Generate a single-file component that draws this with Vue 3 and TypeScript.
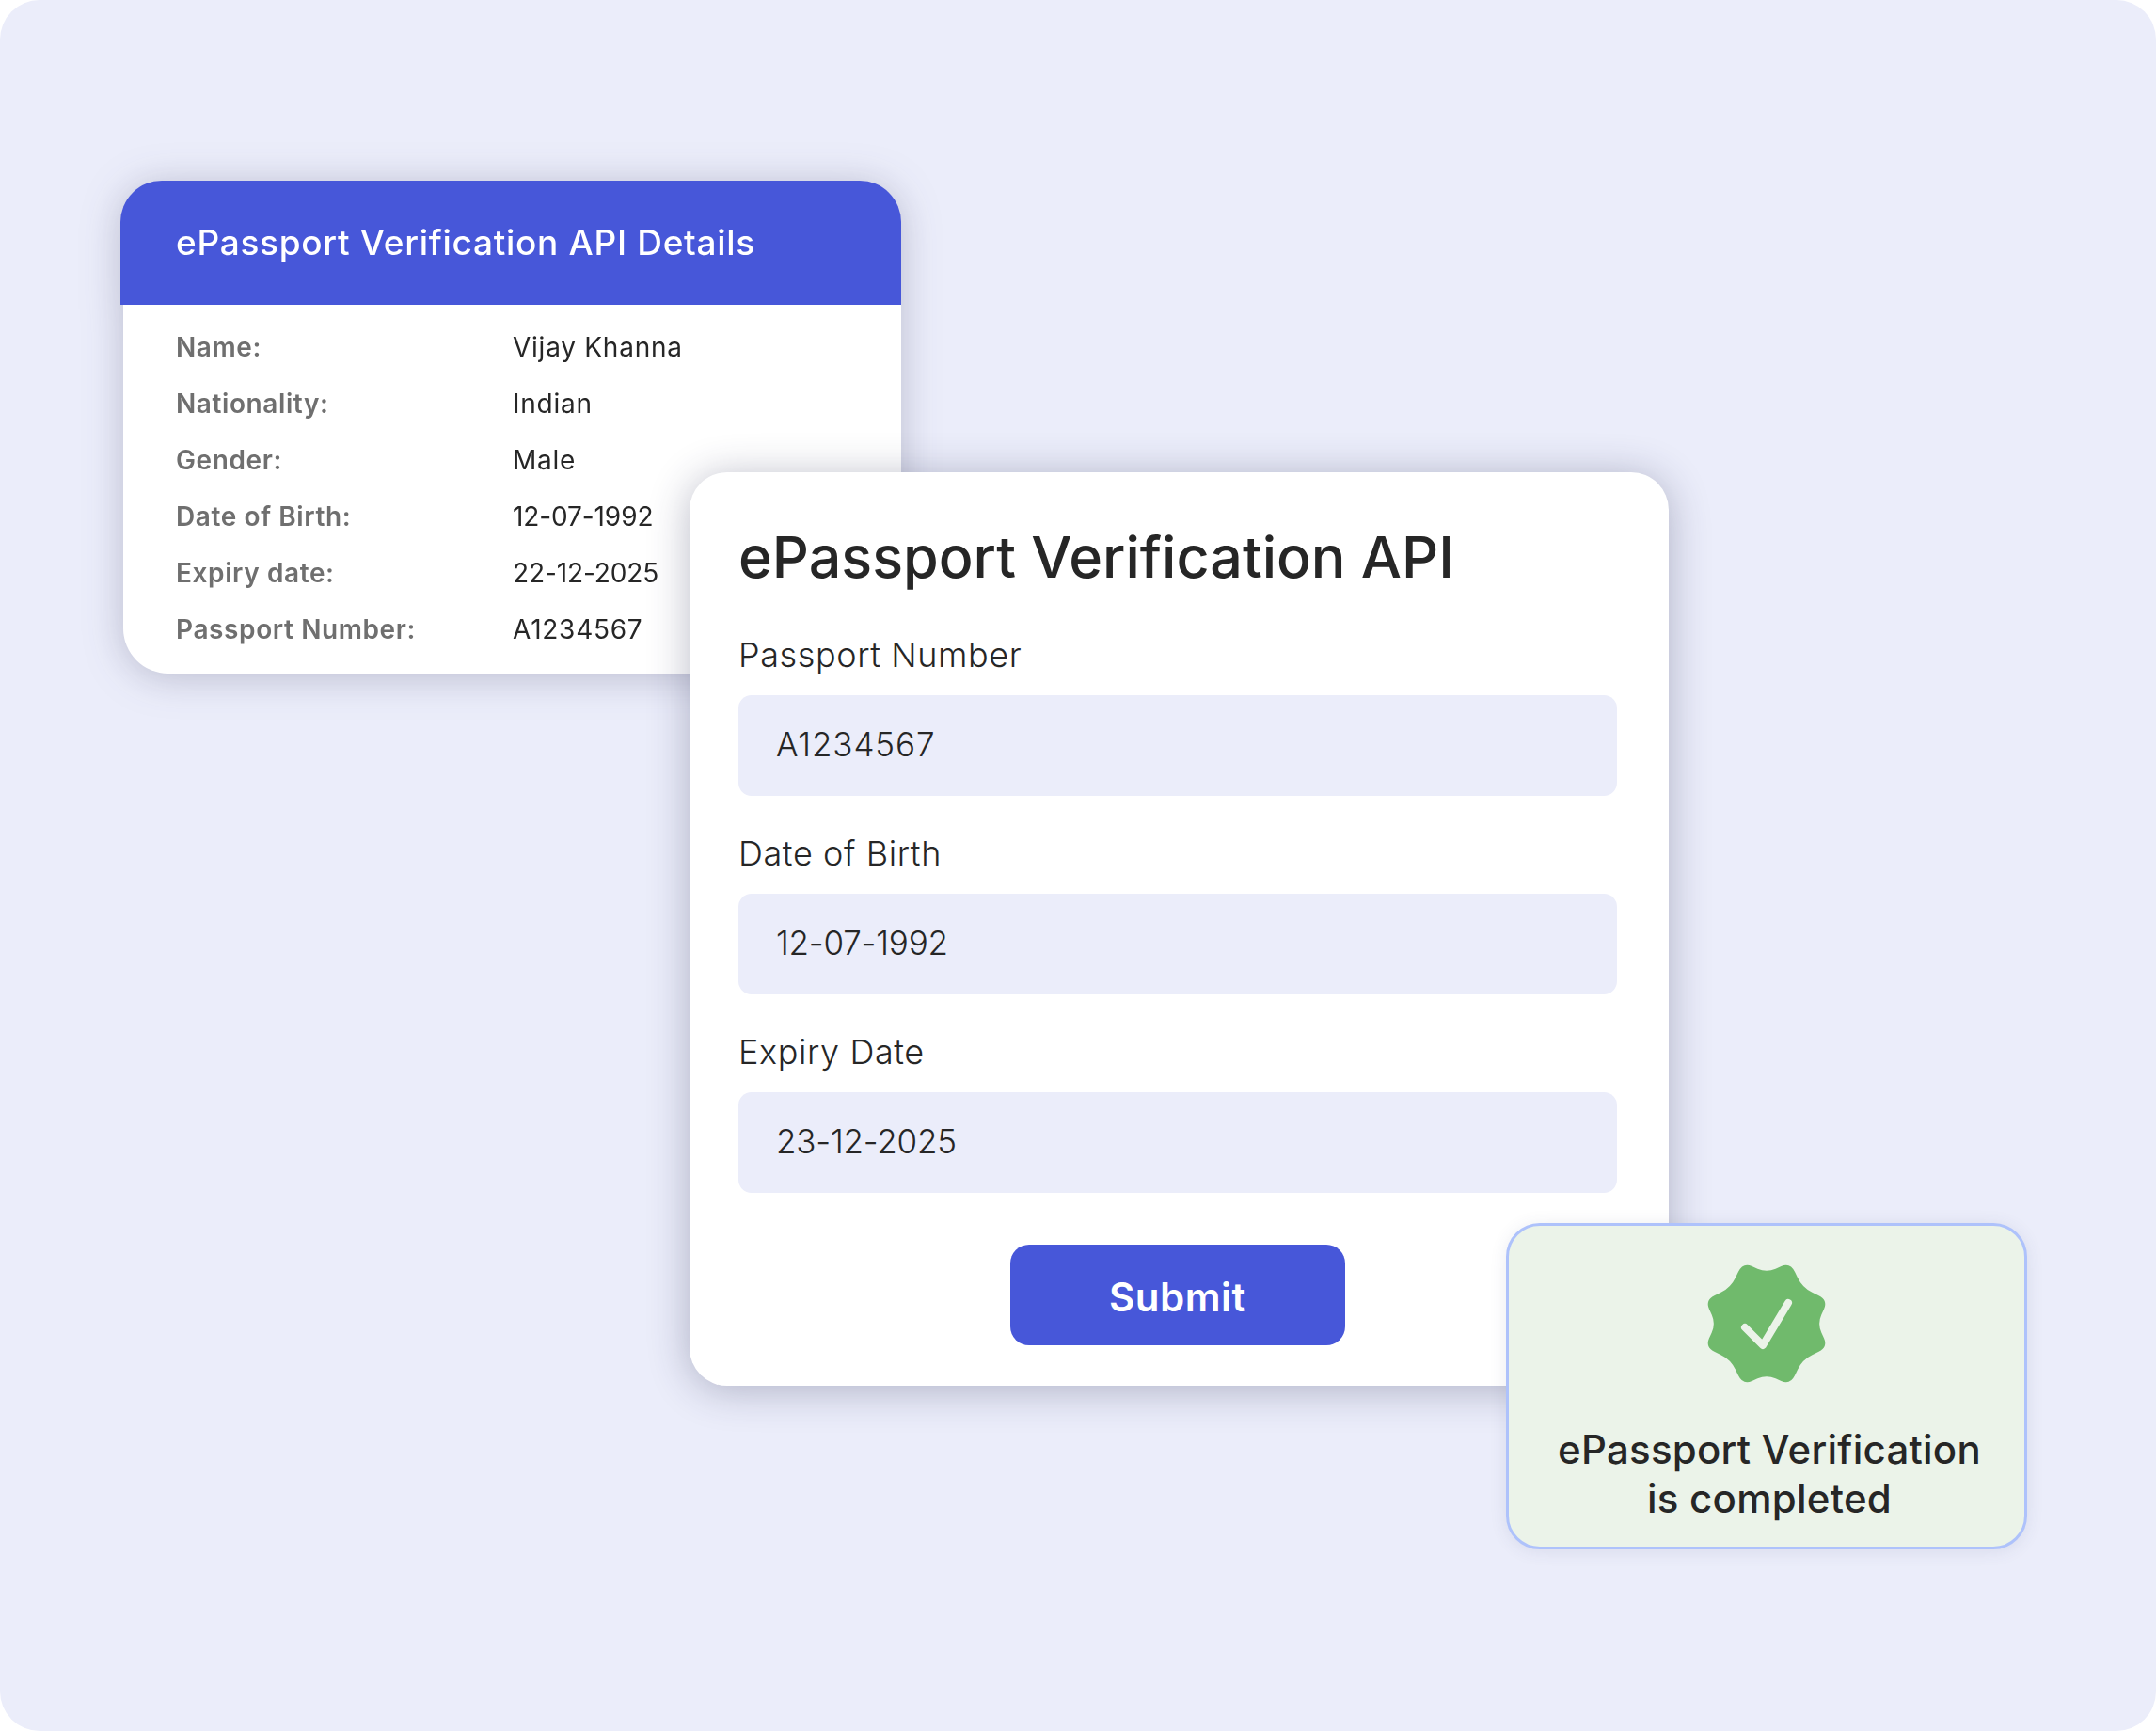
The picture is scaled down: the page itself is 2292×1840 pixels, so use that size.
<script setup lang="ts">
const details: [string, string][] = [
  ['Name:', 'Vijay Khanna'],
  ['Nationality:', 'Indian'],
  ['Gender:', 'Male'],
  ['Date of Birth:', '12-07-1992'],
  ['Expiry date:', '22-12-2025'],
  ['Passport Number:', 'A1234567'],
]
const fields: [string, string][] = [
  ['Passport Number', 'A1234567'],
  ['Date of Birth', '12-07-1992'],
  ['Expiry Date', '23-12-2025'],
]
const isDate = (s: string): boolean => /^\d/.test(s)
function sealPath(): string {
  const pts: [number, number][] = []
  for (let i = 0; i < 16; i++) {
    const r = i % 2 === 0 ? 70 : 54
    const deg = i % 2 === 0 ? -90 + 21 + (i / 2) * 45 + (i % 4 === 0 ? 0 : 3) : -90 + 45 + ((i - 1) / 2) * 45
    const a = (deg * Math.PI) / 180
    pts.push([62 + r * Math.cos(a), 62 + r * Math.sin(a)])
  }
  const mid = (p: [number, number], q: [number, number], t: number): string =>
    `${(p[0] + (q[0] - p[0]) * t).toFixed(2)} ${(p[1] + (q[1] - p[1]) * t).toFixed(2)}`
  let d = `M${mid(pts[15], pts[0], 0.62)}`
  pts.forEach((p, i) => {
    const next = pts[(i + 1) % 16]
    d += ` Q${p[0].toFixed(2)} ${p[1].toFixed(2)} ${mid(p, next, 0.38)}`
    d += ` L${mid(p, next, 0.62)}`
  })
  return d + 'Z'
}
const seal = sealPath()
</script>

<template>
  <div class="page">
    <section class="details">
      <h2 class="details-head">ePassport Verification API Details</h2>
      <div class="details-body">
        <div v-for="row in details" :key="row[0]" class="row">
          <span class="key">{{ row[0] }}</span>
          <span class="val" :class="{ date: isDate(row[1]) }">{{ row[1] }}</span>
        </div>
      </div>
    </section>

    <section class="form">
      <h1 class="title">ePassport Verification API</h1>
      <div class="fields">
        <div v-for="f in fields" :key="f[0]" class="field">
          <label class="label">{{ f[0] }}</label>
          <div class="input" :class="{ date: isDate(f[1]) }">{{ f[1] }}</div>
        </div>
      </div>
      <div class="actions">
        <button class="submit" type="button">Submit</button>
      </div>

      <aside class="done">
        <svg class="seal" width="124" height="124" viewBox="0 0 124 124" aria-hidden="true">
          <path :d="seal" fill="#70BA6C" />
          <path d="M39 66 L58 85 L85 40" fill="none" stroke="#EBF3E9" stroke-width="8" stroke-linecap="round" stroke-linejoin="round" />
        </svg>
        <p class="done-text">ePassport Verification<br />is completed</p>
      </aside>
    </section>
  </div>
</template>

<style scoped>
.page {
  box-sizing: border-box;
  width: 2292px;
  height: 1840px;
  padding: 192px 0 0 128px;
  background: #ebedfa;
  border-radius: 42px;
  font-family: "Inter", "Open Sans", sans-serif;
  font-variant-ligatures: none;
  color: #262626;
  overflow: hidden;
}
.details {
  width: 830px;
  filter: drop-shadow(0 4px 20px rgba(45, 48, 85, 0.26));
}
.details-head {
  margin: 0;
  height: 132px;
  box-sizing: border-box;
  padding: 0 0 2px 59px;
  display: flex;
  align-items: center;
  background: #4757d9;
  border-radius: 44px 44px 0 0;
  color: #fff;
  font-size: 37px;
  font-weight: 500;
  letter-spacing: 0.7px;
}
.details-body {
  margin-left: 3px;
  padding: 14px 56px 18px;
  background: #fff;
  border-radius: 0 0 48px 48px;
}
.row {
  display: flex;
  height: 60px;
  align-items: center;
  padding-top: 1px;
  box-sizing: border-box;
  font-size: 28px;
}
.key {
  width: 358px;
  color: #6f6f6f;
  font-weight: 600;
  letter-spacing: 0.6px;
}
.val {
  font-weight: 370;
  letter-spacing: 0.75px;
}
.val.date {
  letter-spacing: -0.1px;
}
.form {
  position: relative;
  box-sizing: border-box;
  width: 1041px;
  height: 971px;
  margin: -214px 0 0 605px;
  padding: 40px 55px 0 52px;
  background: #fff;
  border-radius: 40px;
  box-shadow: 0 4px 44px rgba(45, 48, 85, 0.32);
}
.title {
  margin: 0;
  height: 100px;
  line-height: 100px;
  font-size: 61px;
  font-weight: 500;
}
.fields {
  margin-top: 24px;
  display: flex;
  flex-direction: column;
  gap: 31px;
}
.label {
  display: block;
  height: 60px;
  line-height: 60px;
  font-size: 36px;
  font-weight: 350;
  letter-spacing: 0.6px;
}
.input {
  margin-top: 13px;
  height: 107px;
  box-sizing: border-box;
  padding: 0 0 3px 40px;
  display: flex;
  align-items: center;
  background: #ebedfa;
  border-radius: 14px;
  font-size: 35px;
  font-weight: 350;
  letter-spacing: 0.9px;
}
.input.date {
  letter-spacing: -0.2px;
}
.actions {
  margin-top: 55px;
  display: flex;
  justify-content: center;
}
.submit {
  width: 356px;
  height: 107px;
  padding: 3px 0 0;
  border: 0;
  border-radius: 20px;
  background: #4757d9;
  color: #fff;
  font-family: inherit;
  font-size: 42px;
  font-weight: 600;
  letter-spacing: 0.5px;
}
.done {
  position: absolute;
  left: 868px;
  top: 798px;
  box-sizing: border-box;
  width: 554px;
  height: 347px;
  padding-top: 42px;
  display: flex;
  flex-direction: column;
  align-items: center;
  background: #ebf3e9;
  border: 3px solid #aec2fb;
  border-radius: 36px;
  box-shadow: 0 2px 18px rgba(60, 65, 110, 0.1);
}
.seal {
  display: block;
  overflow: visible;
}
.done-text {
  margin: 46px 0 0 6px;
  text-align: center;
  font-size: 42px;
  line-height: 52px;
  font-weight: 500;
  letter-spacing: 0.25px;
}
</style>

<style>
html, body { background: #fff; }
</style>
